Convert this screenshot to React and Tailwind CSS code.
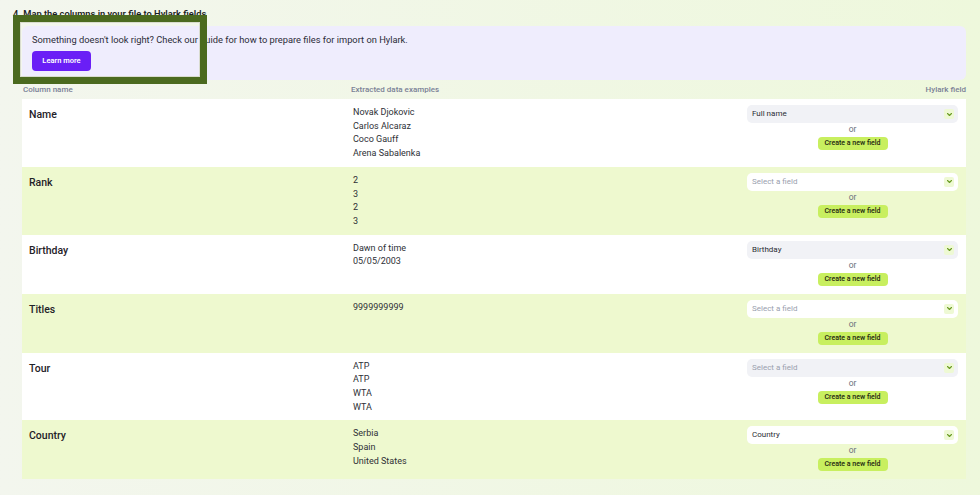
import React from "react";

const rows = [
  { name: "Name", data: ["Novak Djokovic", "Carlos Alcaraz", "Coco Gauff", "Arena Sabalenka"], field: "Full name" },
  { name: "Rank", data: ["2", "3", "2", "3"], field: null },
  { name: "Birthday", data: ["Dawn of time", "05/05/2003"], field: "Birthday" },
  { name: "Titles", data: ["9999999999"], field: null },
  { name: "Tour", data: ["ATP", "ATP", "WTA", "WTA"], field: null },
  { name: "Country", data: ["Serbia", "Spain", "United States"], field: "Country" },
];

function Chevron() {
  return (
    <span className="flex h-[10px] w-[10px] items-center justify-center rounded-[2px] bg-[#eef9d4]">
      <svg width="7" height="7" viewBox="0 0 10 10" fill="none">
        <path d="M2.2 3.6 5 6.4 7.8 3.6" stroke="#6a9b22" strokeWidth="1.6" strokeLinecap="round" strokeLinejoin="round" />
      </svg>
    </span>
  );
}

function FieldPicker({ field, striped }) {
  return (
    <div className="flex w-[211px] flex-col items-center">
      <div className={`flex h-[18px] w-full items-center justify-between rounded-[5px] pl-[5px] pr-[4px] ${striped ? "bg-white" : "bg-[#f1f2f6]"}`}>
        <span className={`text-[8px] ${field ? "text-[#2a2d34]" : "text-[#9aa0ae]"}`}>{field || "Select a field"}</span>
        <Chevron />
      </div>
      <span className="mt-[1px] text-[8.5px] leading-[10px] text-[#6b7180]">or</span>
      <button className="mt-[3px] h-[13px] w-[70px] rounded-[4px] bg-[#c8ef5f] text-[7px] font-medium leading-[13px] text-[#1d2410]">
        Create a new field
      </button>
    </div>
  );
}

export default function App() {
  return (
    <div
      className="relative h-[495px] w-[980px] overflow-hidden bg-gradient-to-r from-[#f3f6ee] to-[#eef8dc] pl-[13px] pt-[8px]"
      style={{ fontFamily: "Roboto, 'Noto Sans', sans-serif" }}
    >
      <h2 className="text-[9.3px] font-semibold leading-[12px] text-[#1c1f24]">4. Map the columns in your file to Hylark fields</h2>

      <div className="ml-[9px] w-[944px]">
        <div className="mt-[6px] rounded-[6px] bg-[#efedfd] pb-[9px] pl-[10px] pt-[8px]">
          <p className="text-[9.3px] leading-[12px] text-[#2b2c38]">
            Something doesn't look right? Check our guide for how to prepare files for import on Hylark.
          </p>
          <button className="mt-[5px] h-[20px] w-[59px] rounded-[4px] bg-[#6a1ff6] text-[7.5px] font-semibold text-white">
            Learn more
          </button>
        </div>

        <div className="flex h-[19px] items-center pl-[1px] text-[8px] font-medium text-[#7a8196]">
          <span className="w-[328px]">Column name</span>
          <span className="flex-1">Extracted data examples</span>
          <span>Hylark field</span>
        </div>

        <div>
          {rows.map((r, i) => {
            const striped = i % 2 === 1;
            return (
              <div key={r.name} className={`flex ${striped ? "bg-[#eef9cf]" : "bg-white"}`}>
                <div className="w-[331px] pl-[7px] pt-[9px] text-[10.5px] font-medium leading-[13px] text-[#1f2228]">{r.name}</div>
                <div className="flex-1 pb-[6px] pt-[7px]">
                  {r.data.map((d, j) => (
                    <div key={j} className="text-[9px] leading-[13.7px] text-[#2e3036]">{d}</div>
                  ))}
                </div>
                <div className="pb-[8px] pr-[8px] pt-[6px]">
                  <FieldPicker field={r.field} striped={striped} />
                </div>
              </div>
            );
          })}
        </div>
      </div>

      <div className="pointer-events-none absolute left-[13px] top-[15px] h-[69px] w-[194px] border-[7px] border-[#4b6a1f] shadow-[inset_0_0_0_1px_#d9dccf]" />
    </div>
  );
}
